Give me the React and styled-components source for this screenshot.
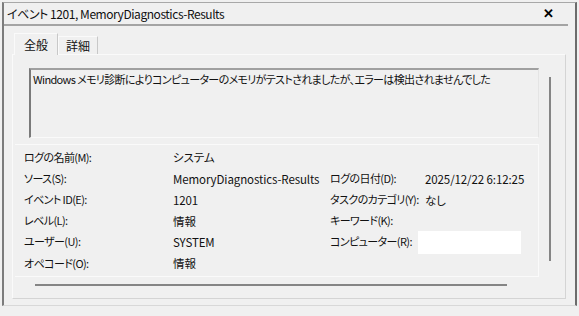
import React from 'react'
import styled, { createGlobalStyle } from 'styled-components'

const GlobalStyle = createGlobalStyle`
  html, body {
    margin: 0;
    padding: 0;
    background: #f0f0f0;
  }
  body {
    font-family: "Noto Sans CJK JP", "Noto Sans", sans-serif;
    font-size: 12px;
    line-height: 1.25;
    font-feature-settings: "palt" 1;
    color: #111;
  }
`

const fields = [
  { label: 'ログの名前(M):', value: 'システム' },
  { label: 'ソース(S):', value: 'MemoryDiagnostics-Results', label2: 'ログの日付(D):', value2: '2025/12/22 6:12:25' },
  { label: 'イベント ID(E):', value: '1201', label2: 'タスクのカテゴリ(Y):', value2: 'なし' },
  { label: 'レベル(L):', value: '情報', label2: 'キーワード(K):', value2: '' },
  { label: 'ユーザー(U):', value: 'SYSTEM', label2: 'コンピューター(R):', blank: true },
  { label: 'オペコード(O):', value: '情報' }
]

const App = () => (
  <>
    <GlobalStyle />
    <Frame>
      <TitleBar>
        <Title>イベント 1201, MemoryDiagnostics-Results</Title>
        <Close>✕</Close>
      </TitleBar>
      <Body>
        <Tabs>
          <Tab active>全般</Tab>
          <Tab>詳細</Tab>
        </Tabs>
        <Panel>
          <Scroller>
            <Message>
              Windows メモリ診断によりコンピューターのメモリがテストされましたが、エラーは検出されませんでした
            </Message>
            <Fields>
              {fields.map(f => (
                <React.Fragment key={f.label}>
                  <Label>{f.label}</Label>
                  <Value>{f.value}</Value>
                  <Label>{f.label2 || ''}</Label>
                  {f.blank ? <BlankBox /> : <Value>{f.value2 || ''}</Value>}
                </React.Fragment>
              ))}
            </Fields>
            <VScroll />
          </Scroller>
          <HScroll />
        </Panel>
      </Body>
    </Frame>
  </>
)

const Frame = styled.div`
  box-sizing: border-box;
  margin: 2px 2px 0 2px;
  height: 304px;
  border-left: 2px solid #7c7c7c;
  border-right: 2px solid #6c6c6c;
  border-top: 1px solid #a8a8a8;
  border-bottom: 1px solid #d8d8d8;
  display: flex;
  flex-direction: column;
`

const TitleBar = styled.div`
  height: 21px;
  margin-right: 7px;
  display: flex;
  align-items: center;
  justify-content: space-between;
  padding: 0 14px 0 3px;
  border-bottom: 2px solid #a4a4a4;
`

const Title = styled.span`
  font-size: 12px;
  letter-spacing: -0.45px;
`

const Close = styled.span`
  font-size: 13px;
  font-weight: 900;
  color: #000;
`

const Body = styled.div`
  flex: 1;
  padding: 6px 8px 6px 8px;
  display: flex;
  flex-direction: column;
`

const Tabs = styled.div`
  display: flex;
  align-items: flex-end;
  height: 22px;
  position: relative;
  z-index: 1;
`

const Tab = styled.div`
  box-sizing: border-box;
  height: ${({ active }) => (active ? '22px' : '18px')};
  padding: 0 ${({ active }) => (active ? '9px' : '7px')};
  margin-left: ${({ active }) => (active ? '2px' : '0')};
  display: flex;
  align-items: center;
  font-size: 12px;
  background: #f0f0f0;
  border-top: 1px solid #fafafa;
  border-left: 1px solid #fafafa;
  border-right: 1px solid #c8c8c8;
  margin-bottom: ${({ active }) => (active ? '-1px' : '0')};
`

const Panel = styled.div`
  flex: 1;
  margin-right: 1px;
  border-top: 1px solid #fafafa;
  border-left: 1px solid #fafafa;
  border-right: 1px solid #d4d4d4;
  border-bottom: 1px solid #d4d4d4;
  padding: 13px 10px 0 2px;
  display: flex;
  flex-direction: column;
  position: relative;
`

const Scroller = styled.div`
  position: relative;
  padding-right: 16px;
`

const Message = styled.div`
  box-sizing: border-box;
  margin-left: 14px;
  height: 70px;
  padding: 3px 2px;
  border-top: 2px solid #a0a0a0;
  border-left: 2px solid #7a7a7a;
  border-right: 1px solid #e4e4e4;
  border-bottom: 1px solid #fafafa;
  font-size: 11px;
  letter-spacing: -0.65px;
  white-space: nowrap;
`

const Fields = styled.div`
  margin-top: 6px;
  height: 133px;
  box-sizing: border-box;
  border-top: 1px solid #fafafa;
  border-right: 1px solid #fafafa;
  border-bottom: 1px solid #fafafa;
  padding: 2px 0 0 9px;
  display: grid;
  grid-template-columns: 149px 157px 95px 1fr;
  grid-auto-rows: 21.2px;
  align-items: center;
`

const Label = styled.div`
  font-size: 11px;
  letter-spacing: -0.6px;
  white-space: nowrap;
`

const Value = styled.div`
  font-size: 11.5px;
  letter-spacing: -0.1px;
  white-space: nowrap;
`

const BlankBox = styled.div`
  width: 103px;
  height: 23px;
  margin-left: -7px;
  background: #ffffff;
`

const VScroll = styled.div`
  position: absolute;
  right: 4px;
  top: 9px;
  width: 2px;
  height: 184px;
  background: #858585;
`

const HScroll = styled.div`
  margin: 7px 0 0 20px;
  width: 472px;
  height: 2px;
  background: #858585;
`

export default App
